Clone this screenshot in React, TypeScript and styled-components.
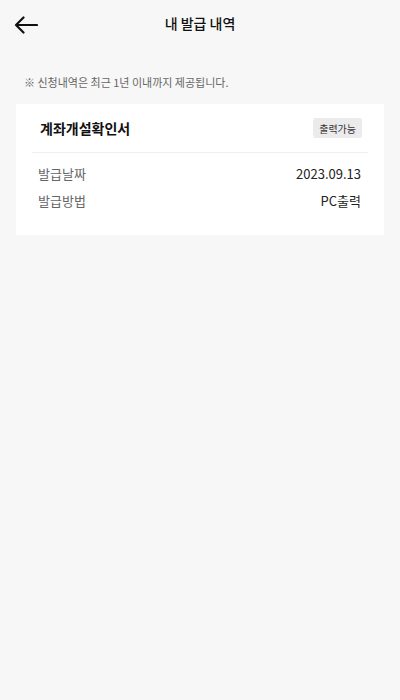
import styled, { createGlobalStyle } from "styled-components";

const GlobalStyle = createGlobalStyle`
    html, body {
        margin: 0;
        padding: 0;
        background: #f7f7f7;
        font-family: "Noto Sans CJK KR", "Noto Sans", sans-serif;
        color: #111111;
    }
    #root {
        min-height: 700px;
    }
`

const BackArrow = () => (
    <svg width="24" height="18" viewBox="0 0 24 18" fill="none">
        <path d="M23 9H2M9.5 1.5L2 9l7.5 7.5" stroke="#111" strokeWidth="2.2" strokeLinecap="round" strokeLinejoin="round" />
    </svg>
);

const rows = [
    { label: "발급날짜", value: "2023.09.13" },
    { label: "발급방법", value: "PC출력" },
];

const App = () => {
    return (
        <Page>
            <GlobalStyle />
            <Header>
                <BackButton aria-label="back">
                    <BackArrow />
                </BackButton>
                <HeaderTitle>내 발급 내역</HeaderTitle>
            </Header>
            <Notice>※ 신청내역은 최근 1년 이내까지 제공됩니다.</Notice>
            <Card>
                <CardHead>
                    <CardTitle>계좌개설확인서</CardTitle>
                    <Badge>출력가능</Badge>
                </CardHead>
                <InfoList>
                    {rows.map(row => (
                        <InfoRow key={row.label}>
                            <InfoLabel>{row.label}</InfoLabel>
                            <InfoValue>{row.value}</InfoValue>
                        </InfoRow>
                    ))}
                </InfoList>
            </Card>
        </Page>
    );
}

const Page = styled.div`
    width: 400px;
    min-height: 700px;
    background: #f7f7f7;
`
const Header = styled.header`
    position: relative;
    height: 46px;
    display: flex;
    align-items: center;
    justify-content: center;
`
const BackButton = styled.button`
    position: absolute;
    left: 14px;
    top: 16px;
    border: none;
    background: none;
    padding: 0;
    display: flex;
    cursor: pointer;
`
const HeaderTitle = styled.h1`
    margin: 0;
    font-size: 14px;
    font-weight: 500;
    color: #111;
`
const Notice = styled.p`
    margin: 27px 0 13px;
    padding-left: 24px;
    font-size: 11px;
    line-height: 18px;
    color: #666;
`
const Card = styled.section`
    margin: 0 16px;
    padding: 0 16px 25px;
    background: #ffffff;
`
const CardHead = styled.div`
    display: flex;
    align-items: center;
    justify-content: space-between;
    height: 48px;
    padding: 0 6px 0 8px;
    border-bottom: 1px solid #f0f0f0;
`
const CardTitle = styled.h2`
    margin: 0;
    font-size: 14px;
    font-weight: 700;
    color: #111;
`
const Badge = styled.span`
    display: inline-flex;
    align-items: center;
    height: 20px;
    padding: 0 6px;
    border-radius: 3px;
    background: #ebebeb;
    font-size: 10px;
    color: #333;
`
const InfoList = styled.div`
    display: flex;
    flex-direction: column;
    gap: 7px;
    padding: 10px 7px 0 6px;
`
const InfoRow = styled.div`
    display: flex;
    justify-content: space-between;
    align-items: center;
    height: 20px;
`
const InfoLabel = styled.span`
    font-size: 13px;
    color: #666;
`
const InfoValue = styled.span`
    font-size: 13px;
    color: #222;
`

export default App;
